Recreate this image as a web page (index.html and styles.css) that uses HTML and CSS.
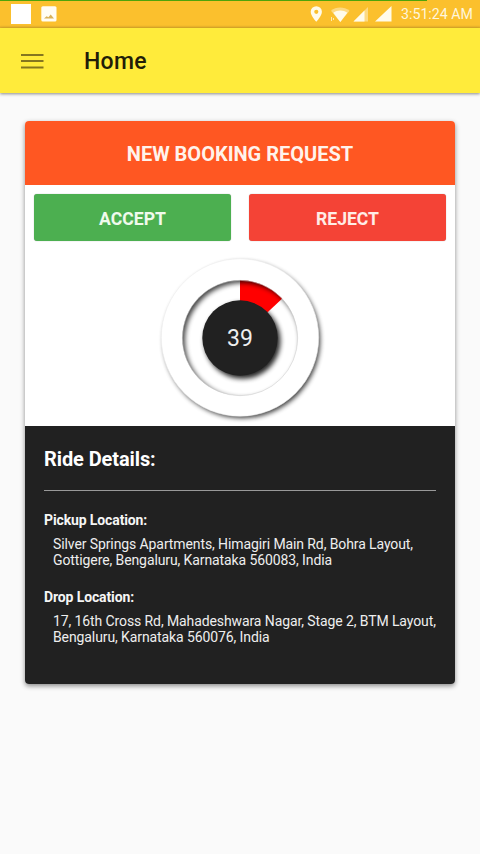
FILE: index.html
```html
<!DOCTYPE html>
<html lang="en">
<head>
<meta charset="utf-8">
<title>Home</title>
<link rel="stylesheet" href="styles.css">
</head>
<body>
<div class="status">
  <div class="status-left">
    <span class="square"></span>
    <svg class="photo" width="16" height="16" viewBox="0 0 16 16"><rect x=".3" y=".3" width="15.2" height="15.2" rx="1.5" fill="#fffdf4"/><path d="M3 12.500l2.600-2.200 1.800 1 2.300-2.800L13 12.500z" fill="#d9b25a"/></svg>
  </div>
  <div class="status-right">
    <svg width="84" height="18" viewBox="0 0 84 18" fill="#fffbea">
      <path fill-rule="evenodd" d="M6.3 1.2a5.6 5.6 0 0 0-5.6 5.6c0 4.2 5.6 10 5.6 10s5.6-5.8 5.6-10a5.6 5.6 0 0 0-5.6-5.6zm0 3.5a2.1 2.1 0 1 1 0 4.2 2.1 2.1 0 0 1 0-4.2z"/>
      <path d="M21 5.8C26 1.5 34 1.5 39.5 5.8L30.3 17z" opacity=".45"/>
      <path d="M23.3 7.8c4-3.2 10-3.2 14 0L30.3 17z"/>
      <path d="M21.5 12v4M23.5 13v2" stroke="#fffbea" stroke-width="1" opacity=".7"/>
      <path d="M43.500 16.500L58 2v14.500z" opacity=".45"/>
      <path d="M43.500 16.500L54.500 5.500v11z"/>
      <path d="M65 16.500L81.500 1v15.500z"/>
    </svg>
    <span class="clock">3:51:24 AM</span>
  </div>
</div>
<header class="bar">
  <svg class="menu" width="23" height="16" viewBox="0 0 23 16"><path d="M0 2h22.500M0 8h22.500M0 14.500h22.500" stroke="#85761f" stroke-width="2"/></svg>
  <h1 class="title">Home</h1>
</header>
<main class="card">
  <div class="request"><span>NEW BOOKING REQUEST</span></div>
  <div class="actions">
    <button class="btn accept">ACCEPT</button>
    <button class="btn reject">REJECT</button>
  </div>
  <div class="dial">
    <svg width="180" height="180" viewBox="0 0 180 180">
      <defs>
        <filter id="blur" x="-20%" y="-20%" width="140%" height="140%"><feGaussianBlur stdDeviation="2.4"/></filter>
        <clipPath id="hole"><circle cx="90" cy="88" r="57.700"/></clipPath>
      </defs>
      <circle cx="92" cy="90" r="78" fill="#000" opacity=".8" filter="url(#blur)"/>
      <circle cx="90" cy="87.500" r="78.700" fill="#fff" stroke="#eee" stroke-width=".6"/>
      <g clip-path="url(#hole)">
        <circle cx="92.500" cy="90.800" r="38" fill="#000" opacity=".85" filter="url(#blur)"/>
        <path d="M90 88V28A60 60 0 0 1 133.900 47.100Z" fill="#f00"/>
        <path fill-rule="evenodd" d="M10 8h160v160H10zM92.500 32.800a57.700 57.700 0 1 0 .01 0z" fill="#000" opacity=".75" filter="url(#blur)"/>
      </g>
      <circle cx="90" cy="88" r="57.700" fill="none" stroke="#ccc" stroke-width=".5"/>
      <circle cx="90" cy="88" r="37.700" fill="#212121"/>
    </svg>
    <span class="count">39</span>
  </div>
  <section class="details">
    <h2>Ride Details:</h2>
    <hr>
    <h3>Pickup Location:</h3>
    <p>Silver Springs Apartments, Himagiri Main Rd, Bohra Layout,<br>Gottigere, Bengaluru, Karnataka 560083, India</p>
    <h3>Drop Location:</h3>
    <p>17, 16th Cross Rd, Mahadeshwara Nagar, Stage 2, BTM Layout,<br>Bengaluru, Karnataka 560076, India</p>
  </section>
</main>
</body>
</html>
```
FILE: styles.css
```css
* { box-sizing: border-box; }
html { overflow: hidden; }
body { margin: 0; height: 854px; background: #fafafa; font-family: Roboto, "Liberation Sans", sans-serif; }
svg { display: block; }
.status { height: 28px; background: linear-gradient(90deg, #4fa30b 427px, #fbc02d 427px) 0 0 / 100% 1px no-repeat, linear-gradient(#fbc02d 25px, #e2ae2b 28px); display: flex; justify-content: space-between; }
.status-left { display: flex; padding: 4px 0 0 11px; gap: 10px; }
.square { width: 20px; height: 20px; background: #fff; }
.photo { margin-top: 2px; }
.status-right { display: flex; padding: 5px 6px 0 0; }
.clock { margin-left: 7px; width: 73px; font-size: 14.2px; line-height: 18px; color: #fff6dc; white-space: nowrap; }
.bar { height: 65px; background: #ffeb3b; box-shadow: 0 1px 3px rgba(0,0,0,.45); display: flex; align-items: center; padding: 2px 0 0 21px; }
.menu { margin-top: -2px; }
.title { margin: 1px 0 0 40px; font-size: 23px; letter-spacing: .3px; font-weight: 500; line-height: 28px; color: #211d08; }
.card { width: 430px; height: 563px; margin: 28px 0 0 25px; border-radius: 4px; overflow: hidden; background: #fff; box-shadow: 0 2px 5px rgba(0,0,0,.45); }
.request { height: 64px; background: #ff5722; color: #fff3ec; font-size: 20px; font-weight: 700; display: flex; align-items: center; justify-content: center; padding-top: 2px; white-space: nowrap; }
.actions { display: flex; gap: 18px; padding: 9px 9px 0; }
.btn { flex: 1; height: 47px; border: 0; border-radius: 3px; font: 700 17.6px Roboto, sans-serif; padding: 2px 0 0; color: #f0faec; box-shadow: 0 0 1px rgba(0,0,0,.4); }
.accept { background: #4caf50; }
.reject { background: #f44336; color: #ffece6; }
.dial { height: 185px; display: grid; justify-items: center; padding-top: 9px; overflow: hidden; }
.dial > * { grid-area: 1 / 1; }
.count { font-size: 23px; line-height: 28px; color: #eee; margin-top: 75px; }
.details { height: 258px; background: #212121; color: #eee; padding: 21px 19px 0; }
h2 { margin: 0; font-size: 20px; letter-spacing: -.1px; line-height: 24px; font-weight: 700; color: #fff; }
hr { border: 0; height: 1px; margin: 19px 0 0; background: #999; }
h3 { margin: 21px 0 0; font-size: 14px; letter-spacing: -.12px; line-height: 17px; font-weight: 700; color: #f5f5f5; }
p { margin: 7px 0 0 9px; font-size: 14px; letter-spacing: -.1px; line-height: 16px; white-space: nowrap; }
p + h3 { margin-top: 21px; }
```
